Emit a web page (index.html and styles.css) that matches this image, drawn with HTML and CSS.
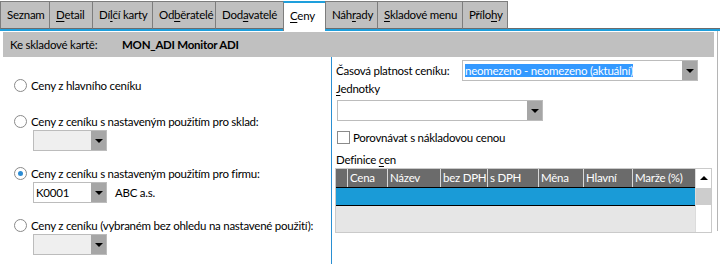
FILE: index.html
```html
<!DOCTYPE html>
<html lang="cs">
<head>
    <meta charset="UTF-8">
    <title>Ceny</title>
    <link rel="stylesheet" href="styles.css">
</head>
<body>
    <div class="tabbar">
        <div class="tab">Seznam</div>
        <div class="tab"><u>D</u>etail</div>
        <div class="tab">Dí<u>l</u>čí karty</div>
        <div class="tab">Od<u>b</u>ěratelé</div>
        <div class="tab">Dod<u>a</u>vatelé</div>
        <div class="tab active"><u>C</u>eny</div>
        <div class="tab">Náh<u>r</u>ady</div>
        <div class="tab"><u>S</u>kladové menu</div>
        <div class="tab">Přílo<u>h</u>y</div>
        <div class="tab-fill"></div>
    </div>

    <div class="content">
        <div class="pane">
            <div class="card-band">
                <span class="band-label">Ke skladové kartě:</span>
                <span class="band-value">MON_ADI Monitor ADI</span>
            </div>

            <div class="columns">
                <div class="left">
                    <div class="option first">
                        <label class="radio-row"><span class="radio"></span>Ceny z hlavního ceníku</label>
                    </div>
                    <div class="option spaced">
                        <label class="radio-row"><span class="radio"></span>Ceny z ceníku s nastaveným použitím pro sklad:</label>
                        <div class="sub">
                            <div class="combo small disabled"><span class="combo-text"></span><span class="arrow"></span></div>
                        </div>
                    </div>
                    <div class="option">
                        <label class="radio-row"><span class="radio checked"></span>Ceny z ceníku s nastaveným použitím pro firmu:</label>
                        <div class="sub">
                            <div class="combo small"><span class="combo-text">K0001</span><span class="arrow"></span></div>
                            <span class="firm">ABC a.s.</span>
                        </div>
                    </div>
                    <div class="option">
                        <label class="radio-row"><span class="radio"></span>Ceny z ceníku (vybraném bez ohledu na nastavené použití):</label>
                        <div class="sub">
                            <div class="combo small disabled"><span class="combo-text"></span><span class="arrow"></span></div>
                        </div>
                    </div>
                </div>

                <div class="right">
                    <div class="validity">
                        <span class="validity-label">Časová platnost ceníku:</span>
                        <div class="combo wide"><span class="combo-text"><span class="selected">neomezeno - neomezeno (aktuální)</span></span><span class="arrow"></span></div>
                    </div>
                    <div class="field-label"><u>J</u>ednotky</div>
                    <div class="combo units"><span class="combo-text"></span><span class="arrow"></span></div>
                    <label class="check-row"><span class="checkbox"></span>Porovnávat s nákladovou cenou</label>
                    <div class="field-label grid-title">Definice <u>c</u>en</div>

                    <div class="grid">
                        <div class="grid-body">
                            <div class="grid-head">
                                <span class="col c0"></span>
                                <span class="col c1">Cena</span>
                                <span class="col c2">Název</span>
                                <span class="col c3">bez DPH</span>
                                <span class="col c4">s DPH</span>
                                <span class="col c5">Měna</span>
                                <span class="col c6">Hlavní</span>
                                <span class="col c7">Marže (%)</span>
                            </div>
                            <div class="grid-row current"></div>
                            <div class="grid-row"></div>
                        </div>
                        <div class="scrollbar">
                            <div class="scroll-up"></div>
                            <div class="scroll-thumb"></div>
                        </div>
                    </div>
                </div>
            </div>
        </div>
        <div class="edge"></div>
    </div>
</body>
</html>
```

FILE: styles.css
```css
body {
    margin: 0;
    font-family: 'Lato', 'Liberation Sans', sans-serif;
    font-size: 11.5px;
    letter-spacing: -0.25px;
    color: #000;
    background-color: #fff;
    width: 720px;
    height: 264px;
    overflow: hidden;
    white-space: nowrap;
}

u {
    text-decoration-thickness: 1px;
    text-underline-offset: 2px;
}

/* zalozky */
.tabbar {
    display: flex;
    align-items: flex-end;
    height: 29px;
    border-bottom: 2px solid #1e9fdc;
}

.tab {
    box-sizing: border-box;
    height: 28px;
    line-height: 26px;
    padding-left: 6px;
    background-color: #c0c0c0;
    border-top: 1px solid #7d7d7d;
    border-left: 1px solid #7d7d7d;
    border-bottom: 1px solid #6c6c6c;
}

.tab:nth-child(1) { width: 49px; }
.tab:nth-child(2) { width: 43px; }
.tab:nth-child(3) { width: 60px; }
.tab:nth-child(4) { width: 63px; }
.tab:nth-child(5) { width: 68px; }
.tab:nth-child(6) { width: 42px; }
.tab:nth-child(7) { width: 52px; }
.tab:nth-child(8) { width: 85px; }
.tab:nth-child(9) { width: 46px; border-right: 1px solid #7d7d7d; }

.tab.active {
    background-color: #fff;
    border-top: 2px solid #1e9fdc;
    border-bottom: none;
    height: 30px;
    margin-bottom: -2px;
    line-height: 25px;
    padding-bottom: 3px;
}

.tab-fill {
    flex: 1;
    border-bottom: 1px solid #6c6c6c;
}

/* obsah */
.content {
    display: flex;
}

.pane {
    width: 717px;
}

.edge {
    width: 1px;
    height: 200px;
    background-color: #b5b5b5;
}

.card-band {
    display: flex;
    margin: 1px 3px 0 3px;
    height: 25px;
    line-height: 25px;
    background-color: #c0c0c0;
    padding-left: 7px;
}

.band-label {
    width: 112px;
}

.band-value {
    font-weight: bold;
}

.columns {
    display: flex;
    height: 207px;
}

.left {
    width: 331px;
    border-right: 1px solid #2a8fd2;
}

.option {
    margin-top: 14px;
}

.option.first {
    margin-top: 20px;
}

.option.spaced {
    margin-top: 20px;
}

.radio-row {
    display: flex;
    align-items: center;
    height: 16px;
    padding-left: 14px;
}

.radio {
    flex-shrink: 0;
    width: 11px;
    height: 11px;
    border: 1px solid #8a8a8a;
    border-radius: 50%;
    background-color: #fff;
    margin-right: 4px;
    position: relative;
}

.radio.checked::after {
    content: "";
    position: absolute;
    left: 3px;
    top: 3px;
    width: 5px;
    height: 5px;
    border-radius: 50%;
    background-color: #2b8bd3;
}

.sub {
    display: flex;
    align-items: center;
    margin-top: 1px;
    padding-left: 33px;
}

.combo {
    display: flex;
    height: 19px;
    border: 1px solid #bcbcbc;
    background-color: #fff;
}

.combo.small {
    width: 72px;
}

.combo.disabled {
    background-color: #efefef;
}

.combo-text {
    flex: 1;
    line-height: 19px;
    padding-left: 2px;
    overflow: hidden;
}

.arrow {
    width: 15px;
    background-color: #a6a6a6;
    position: relative;
}

.arrow::after {
    content: "";
    position: absolute;
    left: 4px;
    top: 8px;
    border-left: 4px solid transparent;
    border-right: 4px solid transparent;
    border-top: 4px solid #000;
}

.firm {
    margin-left: 8px;
}

.right {
    flex: 1;
    padding-left: 4px;
}

.validity {
    display: flex;
    align-items: center;
    margin-top: 3px;
}

.validity-label {
    width: 126px;
}

.combo.wide {
    width: 234px;
}

.selected {
    background-color: #3399ff;
    color: #fff;
}

.field-label {
    height: 15px;
    line-height: 15px;
}

.combo.units {
    width: 204px;
    margin: 4px 0 0 1px;
}

.check-row {
    display: flex;
    align-items: center;
    height: 14px;
    margin: 9px 0 0 1px;
}

.checkbox {
    width: 11px;
    height: 11px;
    border: 1px solid #8a8a8a;
    margin-right: 3px;
}

.grid-title {
    margin-top: 7px;
    height: 17px;
    line-height: 17px;
}

/* tabulka */
.grid {
    display: flex;
    width: 375px;
    height: 63px;
    border: 1px solid #cacaca;
    margin-left: -1px;
}

.grid-body {
    flex: 1;
    background-color: #e6e6e6;
}

.grid-head {
    display: flex;
    height: 18px;
    background-color: #6b6b6b;
    color: #fff;
    border-bottom: 1px solid #000;
}

.col {
    line-height: 18px;
    padding-left: 2px;
    border-right: 1px solid #d8d8d8;
    overflow: hidden;
    box-sizing: border-box;
}

.c0 { width: 12px; }
.c1 { width: 40px; }
.c2 { width: 53px; }
.c3 { width: 47px; }
.c4 { width: 51px; }
.c5 { width: 45px; }
.c6 { width: 49px; }
.c7 { width: 62px; border-right: none; }

.grid-row.current {
    height: 17px;
    background-color: #1a9bd7;
    border-bottom: 1px solid #000;
}

.scrollbar {
    width: 15px;
    background-color: #fff;
    border-left: 1px solid #dcdcdc;
}

.scroll-up {
    height: 19px;
    background-color: #fff;
    position: relative;
}

.scroll-up::after {
    content: "";
    position: absolute;
    left: 4px;
    top: 7px;
    border-left: 4px solid transparent;
    border-right: 4px solid transparent;
    border-bottom: 4px solid #000;
}

.scroll-thumb {
    height: 17px;
    background-color: #cdcdcd;
}
```
